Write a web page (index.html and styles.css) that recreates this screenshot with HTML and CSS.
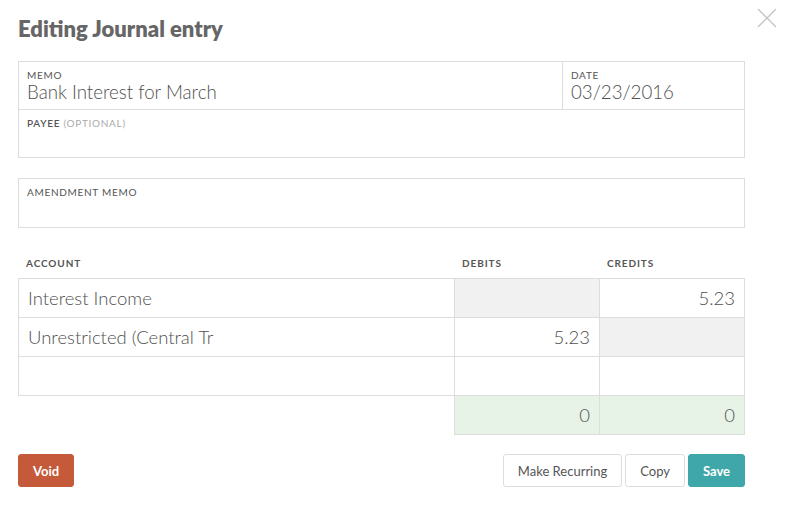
FILE: index.html
```html
<!DOCTYPE html>
<html lang="en">
<head>
    <meta charset="UTF-8">
    <meta name="viewport" content="width=device-width, initial-scale=1.0">
    <title>Editing Journal entry</title>
    <link rel="stylesheet" href="styles.css">
</head>
<body>
    <div class="modal">
        <button class="close" aria-label="Close">
            <svg width="20" height="20" viewBox="0 0 20 20">
                <path d="M1 1 L19 19 M19 1 L1 19" stroke="#c4c4c4" stroke-width="1.3" fill="none"/>
            </svg>
        </button>

        <h1>Editing Journal entry</h1>

        <div class="box">
            <div class="row">
                <div class="field grow">
                    <div class="label">Memo</div>
                    <div class="value">Bank Interest for March</div>
                </div>
                <div class="field date">
                    <div class="label">Date</div>
                    <div class="value">03/23/2016</div>
                </div>
            </div>
            <div class="row">
                <div class="field grow">
                    <div class="label"><b>Payee</b> <span class="muted">(optional)</span></div>
                    <div class="value"></div>
                </div>
            </div>
        </div>

        <div class="box amend">
            <div class="row">
                <div class="field grow">
                    <div class="label">Amendment memo</div>
                    <div class="value"></div>
                </div>
            </div>
        </div>

        <div class="splits">
            <div class="head acc">Account</div>
            <div class="head">Debits</div>
            <div class="head">Credits</div>

            <div class="cell acc top">Interest Income</div>
            <div class="cell num top off"></div>
            <div class="cell num top last">5.23</div>

            <div class="cell acc">Unrestricted (Central Tr</div>
            <div class="cell num">5.23</div>
            <div class="cell num off last"></div>

            <div class="cell acc"></div>
            <div class="cell num"></div>
            <div class="cell num last"></div>

            <div class="blank"></div>
            <div class="cell num total">0</div>
            <div class="cell num total last">0</div>
        </div>

        <div class="actions">
            <button class="btn void">Void</button>
            <div class="right">
                <button class="btn plain">Make Recurring</button>
                <button class="btn plain">Copy</button>
                <button class="btn save">Save</button>
            </div>
        </div>
    </div>
</body>
</html>
```

FILE: styles.css
```css
body {
    margin: 0;
    background: #fff;
    font-family: Lato, "Open Sans", sans-serif;
    color: #555;
}

.modal {
    position: relative;
    width: 727px;
    padding: 16px 18px 0 18px;
}

.close {
    position: absolute;
    top: 8px;
    left: 757px;
    border: none;
    background: none;
    padding: 0;
    cursor: pointer;
}

h1 {
    margin: 0 0 19px 0;
    font-size: 22px;
    font-weight: 800;
    color: #666;
    line-height: 26px;
}

.box {
    border: 1px solid #ddd;
}

.amend {
    margin-top: 20px;
}

.row {
    display: flex;
}

.row + .row {
    border-top: 1px solid #ddd;
}

.field {
    padding: 7px 8px 0 8px;
    height: 40px;
}

.amend .field {
    height: 41px;
}

.grow {
    flex: 1;
}

.date {
    width: 165px;
    border-left: 1px solid #ddd;
}

.label {
    font-size: 10px;
    letter-spacing: 0.7px;
    text-transform: uppercase;
    color: #555;
    line-height: 12px;
}

.label b {
    font-weight: 600;
}

.muted {
    color: #aaa;
}

.value {
    font-size: 18.7px;
    font-weight: 300;
    line-height: 22px;
    color: #4f4f4f;
}

.splits {
    display: grid;
    grid-template-columns: 436px 145px 146px;
    margin-top: 29px;
}

.head {
    font-size: 10px;
    font-weight: bold;
    letter-spacing: 0.9px;
    text-transform: uppercase;
    color: #555;
    padding: 0 8px 9px 8px;
    line-height: 12px;
}

.cell {
    height: 38px;
    line-height: 38px;
    font-size: 18.5px;
    font-weight: 300;
    color: #4f4f4f;
    border-left: 1px solid #ddd;
    border-bottom: 1px solid #ddd;
    padding: 0 9px;
}

.top {
    border-top: 1px solid #ddd;
}

.last {
    border-right: 1px solid #ddd;
}

.num {
    text-align: right;
}

.off {
    background: #f1f1f1;
}

.total {
    background: #e8f3e8;
}

.actions {
    display: flex;
    justify-content: space-between;
    margin-top: 19px;
}

.right {
    display: flex;
    gap: 3px;
}

.btn {
    height: 33px;
    padding: 0 14px;
    font-family: Lato, "Open Sans", sans-serif;
    font-size: 13px;
    border-radius: 3px;
    cursor: pointer;
}

.void {
    background: #c55a3a;
    border: 1px solid #c55a3a;
    color: #fff;
    font-weight: bold;
    width: 56px;
    padding: 0;
}

.plain {
    background: #fff;
    border: 1px solid #ddd;
    color: #555;
}

.save {
    background: #3fa7aa;
    border: 1px solid #3fa7aa;
    color: #fff;
    font-weight: bold;
    width: 57px;
    padding: 0;
}
```
